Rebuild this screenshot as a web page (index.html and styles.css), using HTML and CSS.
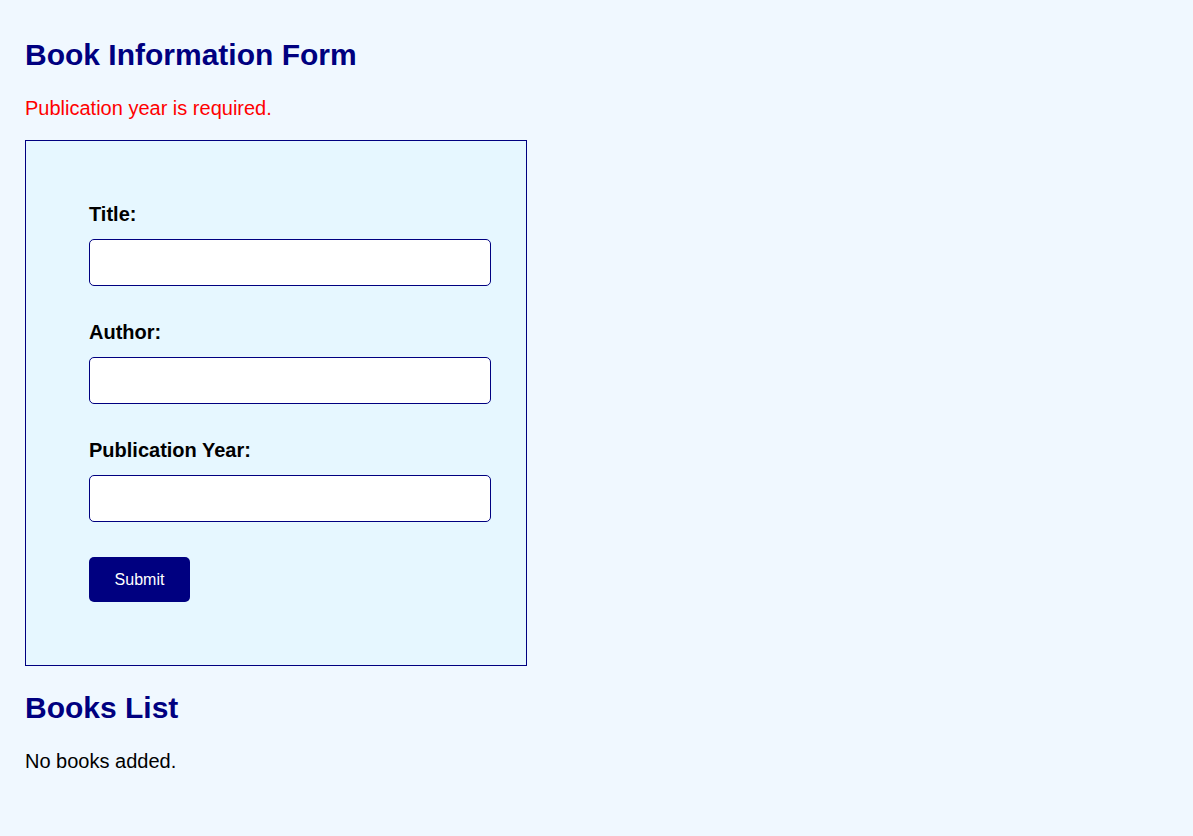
FILE: index.html
```html
<!DOCTYPE html>
<html lang="en">
<head>
<meta charset="utf-8">
<title>Book Information Form</title>
<link rel="stylesheet" href="styles.css">
</head>
<body>
  <h1 class="heading">Book Information Form</h1>
  <p class="error">Publication year is required.</p>
  <form class="book-form">
    <div class="field">
      <label class="field-label" for="title">Title:</label>
      <input class="field-input" id="title" type="text">
    </div>
    <div class="field">
      <label class="field-label" for="author">Author:</label>
      <input class="field-input" id="author" type="text">
    </div>
    <div class="field">
      <label class="field-label" for="year">Publication Year:</label>
      <input class="field-input" id="year" type="text">
    </div>
    <button class="submit-btn" type="button">Submit</button>
  </form>
  <h2 class="heading heading-list">Books List</h2>
  <p class="empty">No books added.</p>
</body>
</html>
```

FILE: styles.css
```css
* {
  box-sizing: border-box;
}

html {
  background: #f0f8ff;
}

body {
  margin: 0;
  padding: 14px 25px 20px;
  background: #f0f8ff;
  font-family: "Liberation Sans", Arial, sans-serif;
  font-size: 20px;
  color: #000;
}

.heading {
  margin: 24px 0;
  font-size: 30px;
  font-weight: bold;
  line-height: 34.5px;
  color: #000080;
}

.heading-list {
  margin-top: 25px;
}

.error {
  margin: 20px 0;
  color: #ff0000;
  line-height: 23px;
}

.book-form {
  width: 502px;
  padding: 62px 35px 63px 63px;
  border: 1px solid #000080;
  background: #e6f7ff;
}

.field {
  display: flex;
  flex-direction: column;
  margin-bottom: 35px;
}

.field-label {
  font-weight: bold;
  font-size: 20px;
  line-height: 23px;
  margin-bottom: 13px;
}

.field-input {
  width: 100%;
  height: 47px;
  border: 1px solid #000080;
  border-radius: 5px;
  background: #fff;
  padding: 0 10px;
  font-family: "Liberation Sans", Arial, sans-serif;
  font-size: 16px;
}

.submit-btn {
  display: block;
  width: 101px;
  height: 45px;
  border: none;
  border-radius: 5px;
  background: #000080;
  color: #fff;
  font-family: "Liberation Sans", Arial, sans-serif;
  font-size: 16px;
  padding: 2px 0 0;
}

.empty {
  margin: 25px 0;
  line-height: 23px;
}
```
